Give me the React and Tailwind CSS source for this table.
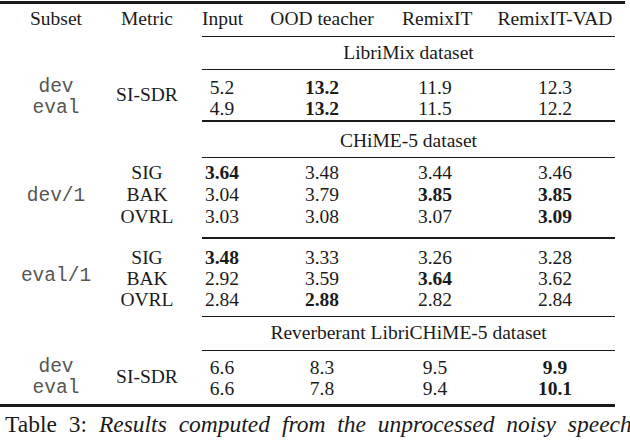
const serif = 'font-[family-name:Liberation_Serif,Times_New_Roman,serif]';
const mono = 'font-[family-name:Liberation_Mono,Courier_New,monospace] text-[#555]';

const header = ['Input', 'OOD teacher', 'RemixIT', 'RemixIT-VAD'];

const Cells = ({ values, lh }) => (
  <div className={`grid grid-cols-[40px_160px_66px_147px] ${lh}`}>
    {values.map((v, i) => (
      <div
        key={i}
        className={`text-center whitespace-nowrap ${i === 3 ? 'pl-[27px]' : ''} ${v.startsWith('*') ? 'font-bold' : ''}`}
      >
        {v.replace('*', '')}
      </div>
    ))}
  </div>
);

const Title = ({ text, top, pad }) => (
  <div className="flex">
    <div className="w-[202px]" />
    <div className={`w-[413px] ${top} border-[#1a1a1a] ${pad} leading-[22px] text-center whitespace-nowrap`}>
      {text}
    </div>
  </div>
);

const Block = ({ subset, subsetRows, metric, metricRows, rows, top, pad, lh }) => (
  <div className="flex">
    {subsetRows ? (
      <div className={`w-[112px] ${top} border-transparent ${pad} ${mono}`}>
        {subsetRows.map((s) => (
          <div key={s} className={`${lh} text-center`}>{s}</div>
        ))}
      </div>
    ) : (
      <div className={`w-[112px] flex items-center justify-center ${mono}`}>{subset}</div>
    )}
    {metricRows ? (
      <div className={`w-[70px] ${top} border-transparent ${pad}`}>
        {metricRows.map((m) => (
          <div key={m} className={`${lh} text-center`}>{m}</div>
        ))}
      </div>
    ) : (
      <div className="w-[70px] flex items-center justify-center whitespace-nowrap">{metric}</div>
    )}
    <div className="w-[20px]" />
    <div className={`w-[413px] ${top} border-[#1a1a1a] ${pad}`}>
      {rows.map((r, i) => (
        <Cells key={i} values={r} lh={lh} />
      ))}
    </div>
  </div>
);

export default function App() {
  return (
    <div className={`w-[630px] h-[440px] overflow-hidden bg-white text-[#1a1a1a] text-[19.5px] ${serif}`}>
      <div className="mt-[1px] w-[625px] h-[3px] bg-[#1a1a1a]" />
      <div className="flex pt-[4px] pb-[6px] leading-[22px]">
        <div className="w-[112px] text-center">Subset</div>
        <div className="w-[70px] text-center">Metric</div>
        <div className="w-[20px]" />
        <div className="w-[413px]">
          <Cells values={header} lh="leading-[22px]" />
        </div>
      </div>

      <Title text="LibriMix dataset" top="border-t" pad="pt-[5px] pb-[5px]" />
      <Block
        subsetRows={['dev', 'eval']}
        metric="SI-SDR"
        rows={[
          ['5.2', '*13.2', '11.9', '12.3'],
          ['4.9', '*13.2', '11.5', '12.2'],
        ]}
        top="border-t"
        pad="pt-[7px] pb-[1px]"
        lh="leading-[21px]"
      />

      <Title text="CHiME-5 dataset" top="border-t-2" pad="pt-[8px] pb-[5px]" />
      <Block
        subset="dev/1"
        metricRows={['SIG', 'BAK', 'OVRL']}
        rows={[
          ['*3.64', '3.48', '3.44', '3.46'],
          ['3.04', '3.79', '*3.85', '*3.85'],
          ['3.03', '3.08', '3.07', '*3.09'],
        ]}
        top="border-t"
        pad="pt-[4px] pb-[9px]"
        lh="leading-[22px]"
      />
      <Block
        subset="eval/1"
        metricRows={['SIG', 'BAK', 'OVRL']}
        rows={[
          ['*3.48', '3.33', '3.26', '3.28'],
          ['2.92', '3.59', '*3.64', '3.62'],
          ['2.84', '*2.88', '2.82', '2.84'],
        ]}
        top="border-t-2"
        pad="pt-[8px] pb-[6px]"
        lh="leading-[21px]"
      />

      <Title text="Reverberant LibriCHiME-5 dataset" top="border-t" pad="pt-[5px] pb-[6px]" />
      <Block
        subsetRows={['dev', 'eval']}
        metric="SI-SDR"
        rows={[
          ['6.6', '8.3', '9.5', '*9.9'],
          ['6.6', '7.8', '9.4', '*10.1'],
        ]}
        top="border-t"
        pad="pt-[6px] pb-[5px]"
        lh="leading-[21px]"
      />
      <div className="w-[615px] h-[3px] bg-[#1a1a1a]" />

      <div className="pt-[5px] pl-[5px] leading-[24px] text-[23.5px] [word-spacing:6px] whitespace-nowrap">
        Table 3: <i>Results computed from the unprocessed noisy speech</i>
      </div>
    </div>
  );
}
